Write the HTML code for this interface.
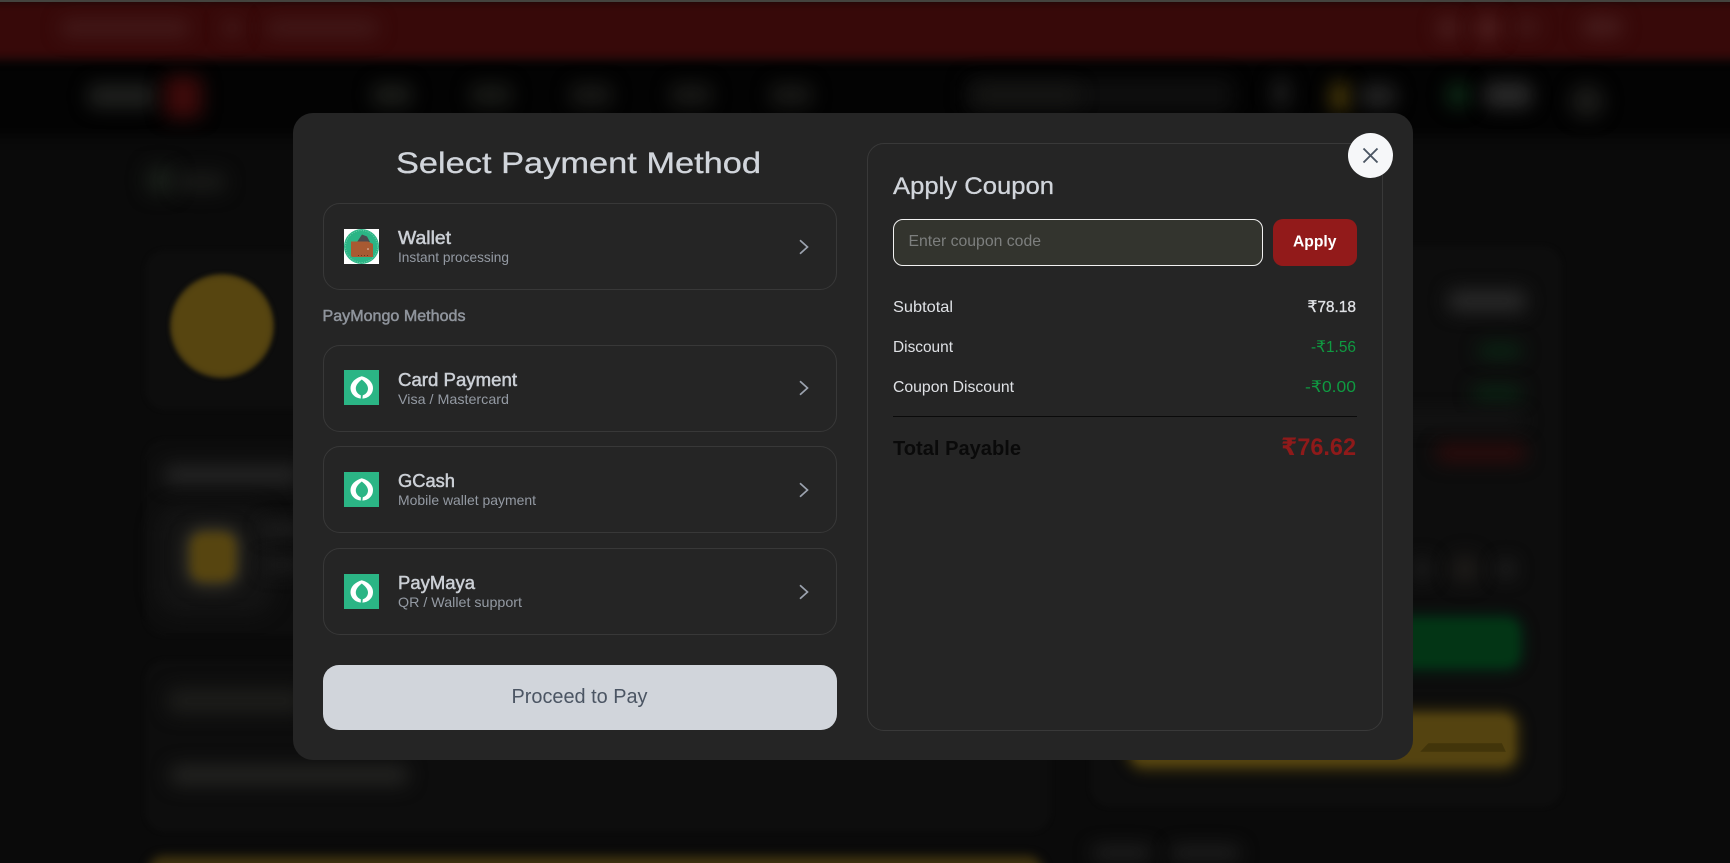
<!DOCTYPE html>
<html lang="en">
<head>
<meta charset="utf-8">
<title>Select Payment Method</title>
<style>
html,body{margin:0;padding:0;width:1730px;height:863px;overflow:hidden;background:#0b0b0b;font-family:"Liberation Sans",sans-serif}
#bg{position:absolute;left:0;top:0;width:1730px;height:863px;overflow:hidden;background:#0a0a0a}
.a{position:absolute}
.b{position:absolute;filter:blur(9px);border-radius:8px}
.c{position:absolute;background:#0d0d0d;border-radius:20px;filter:blur(2px)}
#modal{position:absolute;left:293px;top:113px;width:1120px;height:647px;background:#252525;border-radius:20px}
.row{position:absolute;left:323px;width:512px;height:85px;border:1px solid #383838;border-radius:17px}
.ic{position:absolute;left:344px;width:35px;height:35px;display:block}
.chev{position:absolute;left:797px;width:14px;height:16px;display:block}
#panel{position:absolute;left:867px;top:143px;width:514px;height:586px;border:1px solid #393939;border-radius:17px}
#input{position:absolute;left:893px;top:219px;width:368px;height:45px;background:#33342e;border:1px solid #f2f2f2;border-radius:10px}
#applybtn{position:absolute;left:1273px;top:219px;width:84px;height:47px;background:#921a1a;border-radius:10px}
#line{position:absolute;left:893px;top:416px;width:464px;height:1px;background:#0a0a0a}
#proceed{position:absolute;left:323px;top:665px;width:514px;height:65px;background:#d1d5db;border-radius:16px}
#close{position:absolute;left:1348px;top:133px;width:45px;height:45px;background:#f6f7f9;border-radius:50%}
#txt{position:absolute;left:0;top:0;width:1730px;height:863px}
#txt text{font-family:"Liberation Sans","DejaVu Sans",sans-serif}
.m{stroke-width:.5px}
.h{stroke-width:.3px}
</style>
</head>
<body>
<div id="bg">
  <div class="a" style="left:-20px;top:58px;width:1770px;height:78px;background:#030303;filter:blur(6px)"></div>
  <div class="a" style="left:-20px;top:0;width:1770px;height:59px;background:#370909;filter:blur(5px)"></div>
  <div class="a" style="left:0;top:0;width:1730px;height:2px;background:#44443f"></div>

  <div class="b" style="left:60px;top:19px;width:130px;height:18px;background:#421919"></div>
  <div class="b" style="left:222px;top:19px;width:20px;height:18px;background:#421919"></div>
  <div class="b" style="left:266px;top:19px;width:112px;height:18px;background:#411818"></div>
  <div class="b" style="left:1436px;top:16px;width:24px;height:24px;background:#481c1c;border-radius:50%"></div>
  <div class="b" style="left:1475px;top:15px;width:26px;height:26px;background:#4c1e1e;border-radius:50%"></div>
  <div class="b" style="left:1515px;top:18px;width:24px;height:18px;background:#421818"></div>
  <div class="b" style="left:1582px;top:17px;width:40px;height:20px;background:#461c1c"></div>

  <div class="b" style="left:88px;top:84px;width:68px;height:24px;background:#1f201e"></div>
  <div class="b" style="left:164px;top:76px;width:38px;height:42px;background:#3c0a0a"></div>
  <div class="b" style="left:372px;top:84px;width:40px;height:22px;background:#1b1c19"></div>
  <div class="b" style="left:470px;top:84px;width:42px;height:22px;background:#181916"></div>
  <div class="b" style="left:570px;top:84px;width:42px;height:22px;background:#181816"></div>
  <div class="b" style="left:670px;top:84px;width:42px;height:22px;background:#181816"></div>
  <div class="b" style="left:770px;top:84px;width:42px;height:22px;background:#181816"></div>
  <div class="b" style="left:965px;top:78px;width:268px;height:34px;background:#0e0e0e"></div>
  <div class="b" style="left:975px;top:86px;width:105px;height:18px;background:#161614"></div>
  <div class="b" style="left:1272px;top:78px;width:18px;height:30px;background:#1c1c1c"></div>
  <div class="b" style="left:1330px;top:82px;width:20px;height:30px;background:#443609"></div>
  <div class="b" style="left:1360px;top:84px;width:36px;height:24px;background:#222222"></div>
  <div class="b" style="left:1446px;top:82px;width:24px;height:26px;background:#0c2815;border-radius:50%"></div>
  <div class="b" style="left:1484px;top:82px;width:48px;height:26px;background:#292929"></div>
  <div class="b" style="left:1570px;top:84px;width:34px;height:34px;background:#1a1a18;border-radius:50%"></div>

  <div class="b" style="left:146px;top:166px;width:30px;height:28px;background:#181d18"></div>
  <div class="b" style="left:176px;top:172px;width:50px;height:20px;background:#181917"></div>

  <div class="c" style="left:145px;top:250px;width:906px;height:160px"></div>
  <div class="a" style="left:170px;top:274px;width:104px;height:104px;border-radius:50%;background:radial-gradient(circle,#574510 0,#574510 62%,#3f3310 76%,#261810 90%,rgba(30,12,10,0) 100%);filter:blur(2px)"></div>
  <div class="c" style="left:145px;top:440px;width:906px;height:195px"></div>
  <div class="b" style="left:164px;top:465px;width:136px;height:20px;background:#242424"></div>
  <div class="b" style="left:155px;top:505px;width:120px;height:110px;background:#131313;border-radius:26px"></div>
  <div class="a" style="left:190px;top:532px;width:46px;height:50px;background:#574510;box-shadow:0 0 10px 8px #2d2b24;border-radius:14px;filter:blur(5px)"></div>
  <div class="b" style="left:262px;top:522px;width:40px;height:14px;background:#1f1f1f"></div>
  <div class="b" style="left:262px;top:558px;width:40px;height:14px;background:#1c1c1c"></div>
  <div class="c" style="left:145px;top:660px;width:906px;height:172px"></div>
  <div class="b" style="left:168px;top:688px;width:135px;height:26px;background:#1c1c1a"></div>
  <div class="b" style="left:170px;top:765px;width:238px;height:20px;background:#232321"></div>
  <div class="a" style="left:148px;top:856px;width:895px;height:40px;background:#40330f;border-radius:16px;filter:blur(5px)"></div>

  <div class="c" style="left:1090px;top:246px;width:472px;height:561px"></div>
  <div class="b" style="left:1448px;top:290px;width:78px;height:22px;background:#282828"></div>
  <div class="b" style="left:1478px;top:344px;width:44px;height:14px;background:#0a2614"></div>
  <div class="b" style="left:1472px;top:386px;width:50px;height:14px;background:#0a2614"></div>
  <div class="b" style="left:1100px;top:414px;width:425px;height:12px;background:#161616"></div>
  <div class="b" style="left:1436px;top:444px;width:90px;height:18px;background:#2c0b0b"></div>
  <div class="b" style="left:1412px;top:558px;width:20px;height:22px;background:#1b1b1b"></div>
  <div class="b" style="left:1450px;top:554px;width:30px;height:30px;background:#1c1a18;border-radius:50%"></div>
  <div class="b" style="left:1497px;top:560px;width:18px;height:18px;background:#222222;border-radius:50%"></div>
  <div class="a" style="left:1130px;top:620px;width:388px;height:46px;background:#033515;border-radius:12px;box-shadow:0 0 10px 6px #052b16;filter:blur(4px)"></div>
  <div class="a" style="left:1131px;top:714px;width:384px;height:52px;background:#544310;border-radius:14px;box-shadow:0 0 8px 7px #332a0e;filter:blur(4px)"></div>
  <div class="a" style="left:1420px;top:743px;width:86px;height:9px;background:#42350a;clip-path:polygon(10% 0,95% 0,100% 100%,0 100%);filter:blur(.6px)"></div>
  <div class="b" style="left:1092px;top:846px;width:60px;height:14px;background:#202020"></div>
  <div class="b" style="left:1170px;top:846px;width:70px;height:14px;background:#202020"></div>
</div>

<div id="modal"></div>
<div id="panel"></div>

<div class="row" style="top:203px"></div>
<div class="row" style="top:345px"></div>
<div class="row" style="top:446px"></div>
<div class="row" style="top:548px"></div>

<svg class="ic" style="top:229px" viewBox="0 0 35 35">
  <rect width="35" height="35" fill="#fff"/>
  <circle cx="17.5" cy="17.5" r="17.5" fill="#2bb585"/>
  <circle cx="17.5" cy="17.5" r="16" fill="none" stroke="#6fd0ac" stroke-width="1" stroke-dasharray="1 1.4"/>
  <path d="M13 13 L18 5.5 L23 7.5 L26 13Z" fill="#4a4a4e"/>
  <path d="M7 12.5 H24 L29 15 V28 H9 Q7 28 7 26Z" fill="#a85a32"/>
  <path d="M14 26.5h.8M17 26.5h.8M20 26.5h.8M23 26.5h.8" stroke="#5a2a18" stroke-width="1"/>
  <circle cx="24" cy="20" r=".8" fill="#e8d0c0"/>
</svg>
<svg class="ic" style="top:370px" viewBox="0 0 35 35"><rect width="35" height="35" fill="#2bb585"/><path d="M17.7 6.3C24 7.8 29 12.5 29 18C29 24.3 24 28.6 18 28.6C11.5 28.6 6.5 24 6.5 18C6.5 12.8 11 8.3 17.7 6.3Z" fill="#fff"/><path d="M17.8 9.5C14.5 12 11.8 15 11.8 18.5C11.8 22 14.5 24.5 16.8 25.3V28.8H18.4L18.8 25.3C21.5 24.5 24 22 24 18.5C24 15 21 12 17.8 9.5Z" fill="#2bb585"/></svg>
<svg class="ic" style="top:472px" viewBox="0 0 35 35"><rect width="35" height="35" fill="#2bb585"/><path d="M17.7 6.3C24 7.8 29 12.5 29 18C29 24.3 24 28.6 18 28.6C11.5 28.6 6.5 24 6.5 18C6.5 12.8 11 8.3 17.7 6.3Z" fill="#fff"/><path d="M17.8 9.5C14.5 12 11.8 15 11.8 18.5C11.8 22 14.5 24.5 16.8 25.3V28.8H18.4L18.8 25.3C21.5 24.5 24 22 24 18.5C24 15 21 12 17.8 9.5Z" fill="#2bb585"/></svg>
<svg class="ic" style="top:574px" viewBox="0 0 35 35"><rect width="35" height="35" fill="#2bb585"/><path d="M17.7 6.3C24 7.8 29 12.5 29 18C29 24.3 24 28.6 18 28.6C11.5 28.6 6.5 24 6.5 18C6.5 12.8 11 8.3 17.7 6.3Z" fill="#fff"/><path d="M17.8 9.5C14.5 12 11.8 15 11.8 18.5C11.8 22 14.5 24.5 16.8 25.3V28.8H18.4L18.8 25.3C21.5 24.5 24 22 24 18.5C24 15 21 12 17.8 9.5Z" fill="#2bb585"/></svg>

<svg class="chev" style="top:239px" viewBox="0 0 14 16"><path d="M3 1.2 L10.5 8 L3 14.8" fill="none" stroke="#9ca3af" stroke-width="1.7"/></svg>
<svg class="chev" style="top:380px" viewBox="0 0 14 16"><path d="M3 1.2 L10.5 8 L3 14.8" fill="none" stroke="#9ca3af" stroke-width="1.7"/></svg>
<svg class="chev" style="top:482px" viewBox="0 0 14 16"><path d="M3 1.2 L10.5 8 L3 14.8" fill="none" stroke="#9ca3af" stroke-width="1.7"/></svg>
<svg class="chev" style="top:584px" viewBox="0 0 14 16"><path d="M3 1.2 L10.5 8 L3 14.8" fill="none" stroke="#9ca3af" stroke-width="1.7"/></svg>

<div id="input"></div>
<div id="applybtn"></div>
<div id="line"></div>
<div id="proceed"></div>
<div id="close">
  <svg width="45" height="45" viewBox="0 0 45 45" style="display:block"><path d="M15.5 15.5 L29.5 29.5 M29.5 15.5 L15.5 29.5" stroke="#4b5563" stroke-width="1.9" fill="none"/></svg>
</div>

<svg id="txt" viewBox="0 0 1730 863">
  <text class="h" x="396" y="173" font-size="30" fill="#d1d5db" stroke="#d1d5db" textLength="365" lengthAdjust="spacingAndGlyphs">Select Payment Method</text>

  <text class="m" x="398" y="244" font-size="18" fill="#cbcfd5" stroke="#cbcfd5" textLength="53" lengthAdjust="spacingAndGlyphs">Wallet</text>
  <text x="398" y="262" font-size="14" fill="#949aa3" textLength="111" lengthAdjust="spacingAndGlyphs">Instant processing</text>

  <text class="m" x="322.5" y="321" font-size="16" fill="#8f949c" stroke="#8f949c" textLength="143" lengthAdjust="spacingAndGlyphs">PayMongo Methods</text>

  <text class="m" x="398" y="386" font-size="18" fill="#cbcfd5" stroke="#cbcfd5" textLength="119" lengthAdjust="spacingAndGlyphs">Card Payment</text>
  <text x="398" y="404" font-size="14" fill="#949aa3" textLength="111" lengthAdjust="spacingAndGlyphs">Visa / Mastercard</text>

  <text class="m" x="398" y="487" font-size="18" fill="#cbcfd5" stroke="#cbcfd5" textLength="57" lengthAdjust="spacingAndGlyphs">GCash</text>
  <text x="398" y="505" font-size="14" fill="#949aa3" textLength="138" lengthAdjust="spacingAndGlyphs">Mobile wallet payment</text>

  <text class="m" x="398" y="589" font-size="18" fill="#cbcfd5" stroke="#cbcfd5" textLength="77" lengthAdjust="spacingAndGlyphs">PayMaya</text>
  <text x="398" y="607" font-size="14" fill="#949aa3" textLength="124" lengthAdjust="spacingAndGlyphs">QR / Wallet support</text>

  <text x="511.5" y="703" font-size="20" fill="#4b5563" textLength="136" lengthAdjust="spacingAndGlyphs">Proceed to Pay</text>

  <text class="h" x="893" y="194" font-size="24" fill="#d1d5db" stroke="#d1d5db" textLength="161" lengthAdjust="spacingAndGlyphs">Apply Coupon</text>
  <text x="908.5" y="246" font-size="16" fill="#7d7f7e" textLength="132.5" lengthAdjust="spacingAndGlyphs">Enter coupon code</text>
  <text x="1293" y="246.5" font-size="16" font-weight="700" fill="#ffffff" textLength="43.5" lengthAdjust="spacingAndGlyphs">Apply</text>

  <text x="893" y="312" font-size="16" fill="#dfe1e5" textLength="60" lengthAdjust="spacingAndGlyphs">Subtotal</text>
  <text class="h" x="1307.5" y="312" font-size="16" fill="#dfe1e5" stroke="#dfe1e5" textLength="48.5" lengthAdjust="spacingAndGlyphs">₹78.18</text>

  <text x="893" y="352" font-size="16" fill="#dfe1e5" textLength="60" lengthAdjust="spacingAndGlyphs">Discount</text>
  <text x="1311" y="352" font-size="16" fill="#0f9a41" textLength="45" lengthAdjust="spacingAndGlyphs">-₹1.56</text>

  <text x="893" y="392" font-size="16" fill="#dfe1e5" textLength="121" lengthAdjust="spacingAndGlyphs">Coupon Discount</text>
  <text x="1305" y="392" font-size="16" fill="#0f9a41" textLength="51" lengthAdjust="spacingAndGlyphs">-₹0.00</text>

  <text x="893" y="455" font-size="20" font-weight="700" fill="#0a0a0a" textLength="128" lengthAdjust="spacingAndGlyphs">Total Payable</text>
  <text x="1281" y="455" font-size="24" font-weight="700" fill="#8f1a1a" textLength="75" lengthAdjust="spacingAndGlyphs">₹76.62</text>
</svg>
</body>
</html>
